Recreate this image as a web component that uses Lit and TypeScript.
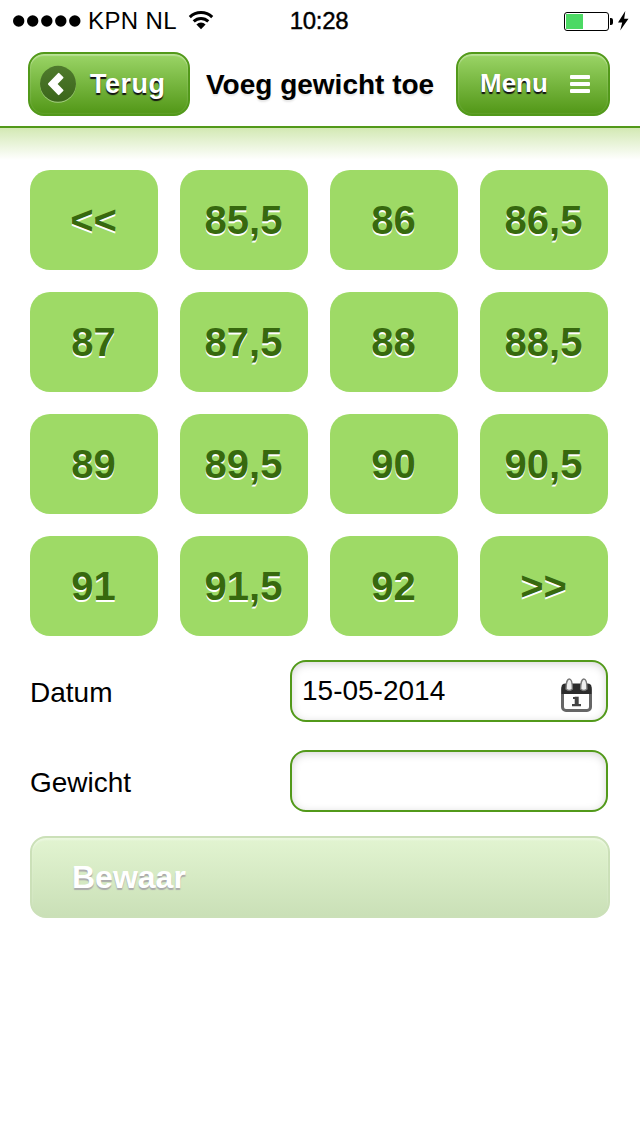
import { LitElement, html, css } from "lit";
import { customElement, state } from "lit/decorators.js";

@customElement("status-bar")
class StatusBar extends LitElement {
  static styles = css`
    :host { display: grid; grid-template-columns: 1fr auto 1fr; height: 40px; align-items: center; color: #000; font-size: 24px; line-height: 40px; }
    .left { display: flex; align-items: center; padding-left: 13px; }
    .dots { width: 68px; height: 12px; margin-right: 7px; }
    .carrier { letter-spacing: 0.4px; margin-right: 11px; padding-top: 1px; white-space: pre; }
    .wifi { width: 26px; height: 20px; margin-top: -1px; }
    .time { letter-spacing: -0.3px; -webkit-text-stroke: 0.4px #000; padding: 1px 2px 0 0; }
    .right { display: flex; justify-content: flex-end; padding-right: 11px; }
    .battery { width: 66px; height: 24px; }
  `;
  render() {
    return html`
      <div class="left">
        <svg class="dots" viewBox="0 0 68 12">
          ${[5.7, 19.7, 33.8, 47.8, 61.8].map((x) => html`<svg><circle cx=${x} cy="6" r="5.7" /></svg>`)}
        </svg>
        <span class="carrier">KPN NL</span>
        <svg class="wifi" viewBox="0 0 26 20" fill="none" stroke="#000" stroke-width="3">
          <path d="M1.8 7.1A16.2 16.2 0 0 1 24.2 7.1" />
          <path d="M5.7 11.4A10.5 10.5 0 0 1 20.3 11.4" />
          <path d="M13 19.2L8.4 14.5A6.5 6.5 0 0 1 17.6 14.5Z" fill="#000" stroke="none" />
        </svg>
      </div>
      <div class="time">10:28</div>
      <div class="right">
        <svg class="battery" viewBox="0 0 66 24">
          <rect x="1.5" y="3.5" width="44" height="18" rx="2.5" fill="#fff" stroke="#000" />
          <rect x="3" y="5" width="17" height="15" fill="#4cd964" />
          <path d="M47 9h1a2.2 2.2 0 0 1 2 2v3a2.2 2.2 0 0 1-2 2h-1z" />
          <path d="M62.3 2L55 13.4H59.2L57.2 21.6L65.5 9.8H61.2Z" />
        </svg>
      </div>`;
  }
}

@customElement("weight-key")
class WeightKey extends LitElement {
  static styles = css`
    :host { display: flex; align-items: center; justify-content: center; background: #9eda66; border-radius: 20px; color: #37690e; font-weight: bold; font-size: 40px; text-shadow: 0 2px 0 #fff; line-height: 46px; }
    .label { padding: 0 1px 1px 0; }
  `;
  render() {
    return html`<span class="label"><slot></slot></span>`;
  }
}

@customElement("app-root")
class AppRoot extends LitElement {
  static styles = css`
    :host { display: block; min-height: 1136px; background: #fff; color: #000; font-family: "Liberation Sans", Arial, Helvetica, sans-serif; }
    .header { display: flex; height: 88px; box-sizing: border-box; border-bottom: 2px solid #52991a; padding: 12px 30px 0 28px; align-items: flex-start; }
    .button { display: flex; align-items: center; box-sizing: border-box; height: 64px; border: 2px solid #52991a; border-radius: 16px; background: linear-gradient(#9bd567, #529717); box-shadow: inset 0 2px 1px rgba(255,255,255,.28), inset 0 0 2px rgba(255,255,255,.25); color: #fff; font-weight: bold; font-size: 26px; line-height: 30px; text-shadow: 0 2px 1px #111; }
    .back { width: 162px; padding-left: 10px; }
    .back .label { font-size: 27px; letter-spacing: .5px; padding-bottom: 1px; }
    .menu { width: 154px; padding-left: 22px; margin-left: auto; }
    .menu .label { width: 90px; padding-bottom: 2px; }
    .chevron { width: 36px; height: 38px; margin-right: 14px; }
    .bars { width: 20px; height: 18px; }
    .title { margin: 0 0 0 16px; font-size: 28px; line-height: 64px; text-shadow: 0 2px 2px rgba(0,0,0,.1); padding-top: 1px; white-space: nowrap; }
    .fade { height: 32px; background: linear-gradient(#d3e9b4, #fff); }
    .content { padding: 10px 32px 0 30px; }
    .keys { display: grid; grid-template-columns: repeat(4, 128px); grid-auto-rows: 100px; gap: 22px; }
    .fields { display: flex; flex-direction: column; gap: 28px; margin-top: 24px; }
    .row { display: grid; grid-template-columns: 260px 318px; font-size: 28px; line-height: 32px; }
    .name { padding-top: 17px; }
    .input { display: flex; box-sizing: border-box; height: 62px; border: 2px solid #52991a; border-radius: 16px; box-shadow: inset 0 2px 8px rgba(0,0,0,.17); justify-content: space-between; padding: 13px 13px 0 10px; }
    .calendar { width: 34px; height: 36px; margin-top: 2px; }
    .save { display: flex; align-items: center; box-sizing: border-box; width: 580px; height: 82px; margin-top: 24px; padding-left: 40px; border: 2px solid #cbe0b8; border-radius: 16px; background: linear-gradient(#e2f4d1, #cae0b7); box-shadow: inset 0 2px 2px rgba(255,255,255,.35); color: #fff; font-weight: bold; font-size: 32px; text-shadow: 0 2px 1px #aaa; }
  `;

  @state() private keys = ["<<", "85,5", "86", "86,5", "87", "87,5", "88", "88,5", "89", "89,5", "90", "90,5", "91", "91,5", "92", ">>"];

  render() {
    return html`
      <status-bar></status-bar>
      <header class="header">
        <div class="button back">
          <svg class="chevron" viewBox="0 0 36 38">
            <defs><linearGradient id="disc" x1="0" y1="0" x2="0" y2="1"><stop stop-color="#4f7a2d" /><stop offset="1" stop-color="#3b661a" /></linearGradient></defs>
            <circle cx="18" cy="19.8" r="18" fill="#a5cf80" />
            <circle cx="18" cy="18.8" r="18" fill="url(#disc)" />
            <path d="M9 19L18.7 8.900L22.500 12.600L16.200 19L22.500 25.400L18.700 29.100Z" fill="#fff" stroke="#fff" stroke-width="2" stroke-linejoin="round" />
          </svg>
          <span class="label">Terug</span>
        </div>
        <h1 class="title">Voeg gewicht toe</h1>
        <div class="button menu">
          <span class="label">Menu</span>
          <svg class="bars" viewBox="0 0 20 18" fill="#fff">
            <rect width="20" height="4" rx="1" /><rect y="7" width="20" height="4" rx="1" /><rect y="14" width="20" height="4" rx="1" />
          </svg>
        </div>
      </header>
      <div class="fade"></div>
      <main class="content">
        <div class="keys">${this.keys.map((k) => html`<weight-key>${k}</weight-key>`)}</div>
        <div class="fields">
          <div class="row">
            <span class="name">Datum</span>
            <div class="input">
              <span>15-05-2014</span>
              <svg class="calendar" viewBox="0 0 34 36">
                <rect x="3.5" y="9" width="28" height="24.5" rx="3.5" fill="#fff" stroke="#666" stroke-width="3" />
                <path d="M2.5 17V10Q2.500 6.500 6.500 6.500H28.500Q32.500 6.500 32.500 10V17Z" fill="#2c2c2c" />
                <path d="M7 12C7 7 8.100 2 10.200 2S13.400 7 13.400 12Q10.200 15 7 12Z" fill="#eee" stroke="#777" stroke-width="1.400" />
                <path d="M21.600 12C21.600 7 22.700 2 24.800 2S28 7 28 12Q24.800 15 21.600 12Z" fill="#eee" stroke="#777" stroke-width="1.400" />
                <path d="M14 21H17.500M13 28.200H22" fill="none" stroke="#444" stroke-width="2.200" />
                <path d="M17.700 19.700V28" stroke="#444" stroke-width="4" />
              </svg>
            </div>
          </div>
          <div class="row">
            <span class="name">Gewicht</span>
            <div class="input"></div>
          </div>
        </div>
        <div class="save">Bewaar</div>
      </main>`;
  }
}
